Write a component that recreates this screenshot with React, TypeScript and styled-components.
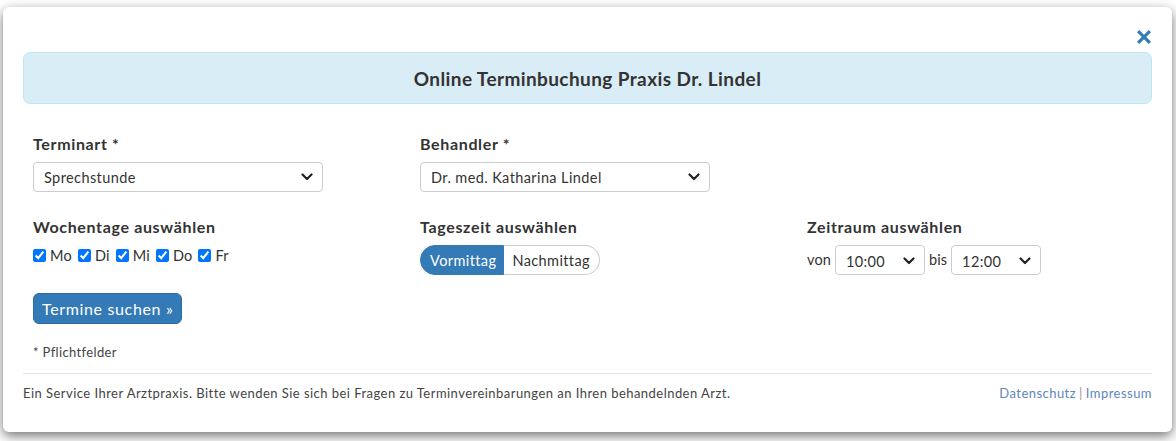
import React from "react";
import styled, { createGlobalStyle } from "styled-components";

const Global = createGlobalStyle`
  html, body { margin: 0; padding: 0; background: #ffffff; }
  body { font-family: "Lato", "Open Sans", sans-serif; color: #333; }
  * { box-sizing: border-box; }
`;

const Page = styled.div`
  padding: 7px 4px 9px 3px;
  height: 441px;
  overflow: hidden;
`;

const Modal = styled.div`
  width: 1169px;
  height: 425px;
  background: #fff;
  border-radius: 6px;
  box-shadow: 0 4px 12px rgba(0, 0, 0, 0.55);
  padding: 20px 20px 0 20px;
  display: flex;
  flex-direction: column;
`;

const Top = styled.div`
  display: flex;
  justify-content: flex-end;
  height: 25px;
  padding-right: 0;
`;

const CloseBtn = styled.button`
  border: 0;
  background: none;
  padding: 0;
  width: 16px;
  height: 16px;
  margin-top: 2px;
  cursor: pointer;
  display: flex;
`;

const Alert = styled.div`
  background: #d9edf7;
  border: 1px solid #bce8f1;
  border-radius: 7px;
  height: 52px;
  display: flex;
  align-items: center;
  justify-content: center;
  font-size: 19px;
  letter-spacing: 0.4px;
  font-weight: 700;
  color: #333;
`;

const Form = styled.div`
  padding: 0 10px;
  margin-top: 29px;
`;

const Row = styled.div<{ $mt?: number }>`
  display: grid;
  grid-template-columns: 387px 387px 300px;
  margin-top: ${(p) => p.$mt ?? 0}px;
`;

const Field = styled.div`
  display: flex;
  flex-direction: column;
`;

const Label = styled.div`
  font-size: 16px;
  font-weight: 700;
  letter-spacing: 0.65px;
  line-height: 22px;
  color: #333;
  margin-bottom: 7px;
`;

const SelectBox = styled.div<{ $w: number; $sm?: boolean }>`
  width: ${(p) => p.$w}px;
  height: 30px;
  border: 1px solid #ccc;
  border-radius: 4px;
  display: flex;
  align-items: center;
  justify-content: space-between;
  padding: ${(p) => (p.$sm ? "2px 9px 0 10px" : "0 9px 0 10px")};
  font-size: 14.5px;
  letter-spacing: 0.4px;
  color: #333;
  background: #fff;
`;

const Chevron = () => (
  <svg width="12" height="8" viewBox="0 0 12 8">
    <polyline points="1.5,1.5 6,6 10.5,1.5" fill="none" stroke="#222" strokeWidth="2.2" strokeLinecap="round" strokeLinejoin="round" />
  </svg>
);

const Checks = styled.div`
  display: flex;
  align-items: center;
  height: 22px;
  margin-top: -1px;
`;

const CheckLabel = styled.label`
  display: flex;
  align-items: center;
  font-size: 14.5px;
  letter-spacing: 0.2px;
  color: #333;
  margin-right: 6px;
  input {
    margin: 0 4px 0 0;
    width: 13px;
    height: 13px;
  }
`;

const Toggle = styled.div`
  display: flex;
  height: 30px;
`;

const ToggleBtn = styled.div<{ $active?: boolean; $first?: boolean }>`
  display: flex;
  align-items: center;
  padding: ${(p) => (p.$first ? "0 7px 0 9px" : "0 9px 0 8px")};
  font-size: 14.5px;
  letter-spacing: 0.4px;
  background: ${(p) => (p.$active ? "#337ab7" : "#fff")};
  color: ${(p) => (p.$active ? "#fff" : "#333")};
  border: 1px solid ${(p) => (p.$active ? "#337ab7" : "#ccc")};
  border-radius: ${(p) => (p.$first ? "15px 0 0 15px" : "0 15px 15px 0")};
  ${(p) => (p.$first ? "" : "border-left: 0;")}
`;

const Range = styled.div`
  display: flex;
  align-items: center;
  gap: 4px;
  font-size: 14.5px;
  letter-spacing: 0.4px;
  color: #333;
`;

const RangeText = styled.span`
  margin-top: -1px;
  letter-spacing: 0.1px;
`;

const SearchBtn = styled.button`
  margin-top: 18px;
  align-self: flex-start;
  height: 31px;
  padding: 0 8px;
  border: 1px solid #2e6da4;
  background: #337ab7;
  color: #fff;
  font-family: inherit;
  font-size: 16px;
  letter-spacing: 0.65px;
  border-radius: 6px;
  cursor: pointer;
`;

const Required = styled.div`
  margin-top: 20px;
  font-size: 13px;
  letter-spacing: 0.35px;
  color: #444;
  line-height: 16px;
`;

const Hr = styled.hr`
  border: 0;
  border-top: 1px solid #e5e5e5;
  margin: 13px 0 0 0;
`;

const Footer = styled.div`
  display: flex;
  justify-content: space-between;
  align-items: center;
  font-size: 13px;
  letter-spacing: 0.46px;
  color: #444;
  margin-top: 11px;
  line-height: 16px;
`;

const Links = styled.div`
  color: #5f85b8;
  a { color: #5f85b8; text-decoration: none; }
`;

const Sep = styled.span`
  color: #999;
  margin: 0 3px;
`;

export default function App() {
  const days = ["Mo", "Di", "Mi", "Do", "Fr"];
  return (
    <>
      <Global />
      <Page>
        <Modal>
          <Top>
            <CloseBtn aria-label="close">
              <svg width="16" height="16" viewBox="0 0 16 16">
                <path
                  d="M3.2 1 L8 5.8 L12.8 1 L15 3.2 L10.2 8 L15 12.8 L12.8 15 L8 10.2 L3.2 15 L1 12.8 L5.8 8 L1 3.2 Z"
                  fill="#337ab7"
                />
              </svg>
            </CloseBtn>
          </Top>
          <Alert>Online Terminbuchung Praxis Dr. Lindel</Alert>
          <Form>
            <Row>
              <Field>
                <Label>Terminart *</Label>
                <SelectBox $w={290}>
                  <span>Sprechstunde</span>
                  <Chevron />
                </SelectBox>
              </Field>
              <Field>
                <Label>Behandler *</Label>
                <SelectBox $w={290}>
                  <span>Dr. med. Katharina Lindel</span>
                  <Chevron />
                </SelectBox>
              </Field>
              <div />
            </Row>
            <Row $mt={24}>
              <Field>
                <Label>Wochentage auswählen</Label>
                <Checks>
                  {days.map((d) => (
                    <CheckLabel key={d}>
                      <input type="checkbox" defaultChecked />
                      {d}
                    </CheckLabel>
                  ))}
                </Checks>
              </Field>
              <Field>
                <Label>Tageszeit auswählen</Label>
                <Toggle>
                  <ToggleBtn $active $first>Vormittag</ToggleBtn>
                  <ToggleBtn>Nachmittag</ToggleBtn>
                </Toggle>
              </Field>
              <Field>
                <Label>Zeitraum auswählen</Label>
                <Range>
                  <RangeText>von</RangeText>
                  <SelectBox $w={90} $sm>
                    <span>10:00</span>
                    <Chevron />
                  </SelectBox>
                  <RangeText>bis</RangeText>
                  <SelectBox $w={90} $sm>
                    <span>12:00</span>
                    <Chevron />
                  </SelectBox>
                </Range>
              </Field>
            </Row>
            <Field>
              <SearchBtn>Termine suchen »</SearchBtn>
              <Required>* Pflichtfelder</Required>
            </Field>
          </Form>
          <Hr />
          <Footer>
            <span>Ein Service Ihrer Arztpraxis. Bitte wenden Sie sich bei Fragen zu Terminvereinbarungen an Ihren behandelnden Arzt.</span>
            <Links>
              <a href="#">Datenschutz</a>
              <Sep>|</Sep>
              <a href="#">Impressum</a>
            </Links>
          </Footer>
        </Modal>
      </Page>
    </>
  );
}
